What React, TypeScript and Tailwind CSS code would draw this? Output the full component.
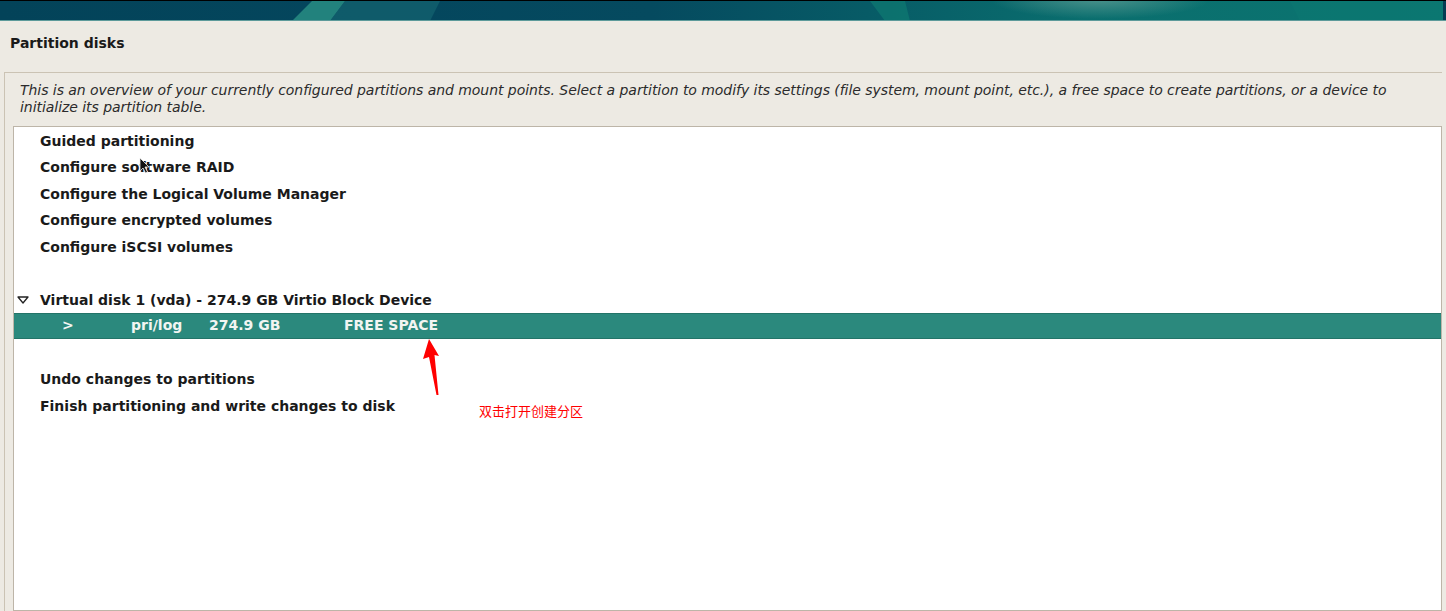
const items = [
  'Guided partitioning',
  'Configure software RAID',
  'Configure the Logical Volume Manager',
  'Configure encrypted volumes',
  'Configure iSCSI volumes',
];

function Banner() {
  return (
    <div className="relative h-[21px] shrink-0 overflow-hidden border-t border-black bg-[linear-gradient(90deg,#034359_0%,#04465d_25%,#054a5f_45%,#075b66_60%,#0a6e6e_75%,#0b7570_100%)]">
      <svg className="absolute inset-0" width="1446" height="20" viewBox="0 0 1446 20" preserveAspectRatio="none">
        <defs>
          <radialGradient id="glow" cx="0.5" cy="0.3" r="0.5">
            <stop offset="0" stopColor="#5a9a92" stopOpacity="0.8" />
            <stop offset="1" stopColor="#5a9a92" stopOpacity="0" />
          </radialGradient>
        </defs>
        <polygon points="292,20 312,0 345,0 330,20" fill="#2a9186" opacity="0.8" />
        <polygon points="330,20 345,0 440,0 430,20" fill="#1a6f78" opacity="0.5" />
        <polygon points="870,0 905,0 910,20 885,20" fill="#0e7a72" opacity="0.7" />
        <polygon points="1290,0 1446,0 1446,20 1300,20" fill="#0c7872" opacity="0.6" />
        <ellipse cx="1100" cy="6" rx="110" ry="20" fill="url(#glow)" />
      </svg>
      <div className="absolute right-0 top-0 h-full w-[3px] bg-[#043c52]" />
      <div className="absolute bottom-0 left-0 h-px w-full bg-[#5d9a9a]" />
    </div>
  );
}

function Row({ children, selected }: { children?: React.ReactNode; selected?: boolean }) {
  return (
    <div
      className={
        selected
          ? 'flex h-[26.5px] items-center border-y border-[#237468] bg-[#2b897d] text-[#f2f5f2]'
          : 'flex h-[26.5px] items-center pt-[2px] text-[#1a1a1a]'
      }
    >
      {children}
    </div>
  );
}

export default function App() {
  return (
    <div className="relative flex h-[611px] w-[1446px] flex-col overflow-hidden bg-[#edeae3] font-['DejaVu_Sans',sans-serif]">
      <Banner />
      <div className="px-[10px] pt-[13px] pb-[20px] text-[14px] font-bold leading-[18px] text-[#1a1a1a]">Partition disks</div>

      <div className="ml-[4px] mr-[4px] flex flex-1 flex-col border-l border-t border-[#cbc3b4] pl-[8px]">
        <p className="pl-[7px] pr-[40px] pt-[9px] pb-[10px] text-[14px] italic leading-[17px] tracking-[-0.05px] text-[#2b2b2b]">
          This is an overview of your currently configured partitions and mount points. Select a partition to modify its settings (file system, mount point, etc.), a free space to create partitions, or a device to initialize its partition table.
        </p>

        <div className="flex-1 border border-[#bdb5a8] bg-white text-[14px] font-bold leading-[17px]">
          {items.map((t) => (
            <Row key={t}>
              <span className="pl-[26px]">{t}</span>
            </Row>
          ))}
          <Row />
          <Row>
            <svg className="ml-[3px] mr-[11px]" width="12" height="8" viewBox="0 0 12 8">
              <polygon points="1,1 11,1 6,7" fill="none" stroke="#222" strokeWidth="1.3" strokeLinejoin="round" />
            </svg>
            <span>Virtual disk 1 (vda) - 274.9 GB Virtio Block Device</span>
          </Row>
          <Row selected>
            <span className="w-[117px] pl-[48px]">&gt;</span>
            <span className="w-[78px]">pri/log</span>
            <span className="w-[135px]">274.9 GB</span>
            <span>FREE SPACE</span>
          </Row>
          <Row />
          <Row>
            <span className="pl-[26px]">Undo changes to partitions</span>
          </Row>
          <Row>
            <span className="pl-[26px]">Finish partitioning and write changes to disk</span>
          </Row>
        </div>
      </div>

      {/* mouse pointer */}
      <svg className="absolute left-[139px] top-[157px]" width="11" height="17" viewBox="0 0 11 17">
        <path d="M1 1 L1 14 L4 11 L6.5 16 L8.5 15 L6 10 L10 10 Z" fill="#111" stroke="#eee" strokeWidth="0.8" />
      </svg>

      {/* annotation arrow */}
      <svg className="absolute left-[415px] top-[336px]" width="30" height="62" viewBox="0 0 30 62">
        <polygon points="14,3 24,20 19.5,19 23.5,59 21.5,59 14,21 8,23" fill="#ff0000" />
      </svg>
      <div className="absolute left-[479px] top-[402px] font-['Noto_Sans_CJK_SC',sans-serif] text-[13px] leading-[18px] text-[#ff0000]">
        双击打开创建分区
      </div>
    </div>
  );
}
